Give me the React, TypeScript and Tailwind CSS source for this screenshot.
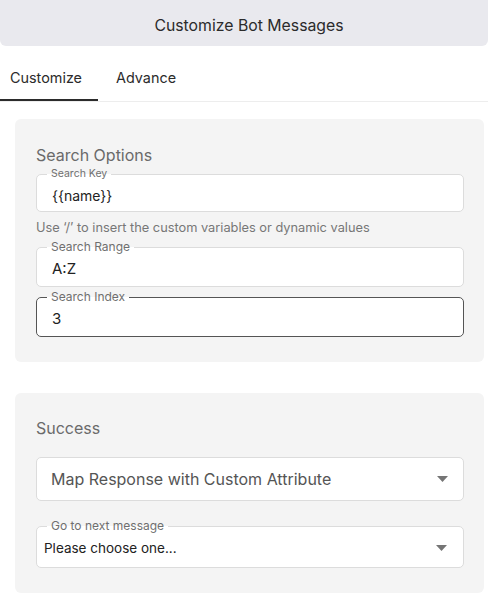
import { ReactNode } from "react";

function Outlined({
  label,
  labelSize = "text-[12px]",
  focused,
  children,
  h,
}: {
  label: string;
  labelSize?: string;
  focused?: boolean;
  children: ReactNode;
  h: string;
}) {
  return (
    <div
      className={`relative flex ${h} items-center rounded-[5px] border bg-white px-[14px] ${
        focused ? "border-[#555]" : "border-[#dcdcdc]"
      }`}
    >
      <span
        className={`absolute left-[10px] top-[-8px] bg-[linear-gradient(to_bottom,#f4f4f4_50%,#ffffff_50%)] px-[4px] leading-[14px] text-[#6f6f6f] ${labelSize}`}
      >
        {label}
      </span>
      {children}
    </div>
  );
}

function Caret() {
  return (
    <svg width="11" height="6" viewBox="0 0 11 6" className="shrink-0">
      <path d="M0 0h11L5.5 6z" fill="#757575" />
    </svg>
  );
}

export default function App() {
  return (
    <div className="w-[488px] min-h-[612px] bg-white font-['Inter',sans-serif]">
      <div className="flex h-[46px] items-center justify-center rounded-b-md bg-[#e9e9ee] pl-[10px] pt-[5px] text-[15.8px] text-[#2b2b2b]">
        Customize Bot Messages
      </div>

      <div className="flex h-[56px] border-b border-[#ededed] text-[14.4px] text-[#2b2b2b]">
        <div className="flex w-[98px] items-center justify-center border-b-[2px] border-[#2b2b2b] pr-[6px] pt-[11px]">
          Customize
        </div>
        <div className="flex items-center pl-[18px] pt-[9px]">Advance</div>
      </div>

      <div className="ml-[15px] mr-[4px] mt-[17px] rounded-md bg-[#f4f4f4] pb-[25px] pl-[21px] pr-[20px] pt-[26px]">
        <div className="text-[16px] leading-[20px] text-[#6a6a6a]">Search Options</div>
        <div className="mt-[9px]">
          <Outlined label="Search Key" labelSize="text-[10.5px]" h="h-[38px]">
            <div className="pl-[1px] pt-[5px] text-[14px] leading-[18px] text-[#222]">{"{{name}}"}</div>
          </Outlined>
        </div>
        <div className="mt-[8px] text-[12.8px] leading-[16px] text-[#777]">
          Use ‘/’ to insert the custom variables or dynamic values
        </div>
        <div className="mt-[11px]">
          <Outlined label="Search Range" h="h-[40px]">
            <div className="pl-[1px] pt-[4px] text-[15px] leading-[18px] text-[#222]">A:Z</div>
          </Outlined>
        </div>
        <div className="mt-[10px]">
          <Outlined label="Search Index" h="h-[40px]" focused>
            <div className="pl-[1px] pt-[4px] text-[15px] leading-[18px] text-[#222]">3</div>
          </Outlined>
        </div>
      </div>

      <div className="ml-[15px] mr-[4px] mt-[31px] rounded-md bg-[#f4f4f4] pb-[25px] pl-[21px] pr-[20px] pt-[25px]">
        <div className="text-[16px] leading-[20px] text-[#6a6a6a]">Success</div>
        <div className="mt-[19px] flex h-[44px] items-center justify-between rounded-[5px] border border-[#dcdcdc] bg-white pl-[14px] pr-[15px]">
          <span className="text-[16px] text-[#555]">Map Response with Custom Attribute</span>
          <Caret />
        </div>
        <div className="mt-[25px]">
          <Outlined label="Go to next message" h="h-[42px]">
            <div className="-ml-[7px] flex flex-1 items-center justify-between pr-[2px] pt-[2px]">
              <span className="text-[13.5px] leading-[18px] text-[#222]">Please choose one...</span>
              <Caret />
            </div>
          </Outlined>
        </div>
      </div>
    </div>
  );
}
